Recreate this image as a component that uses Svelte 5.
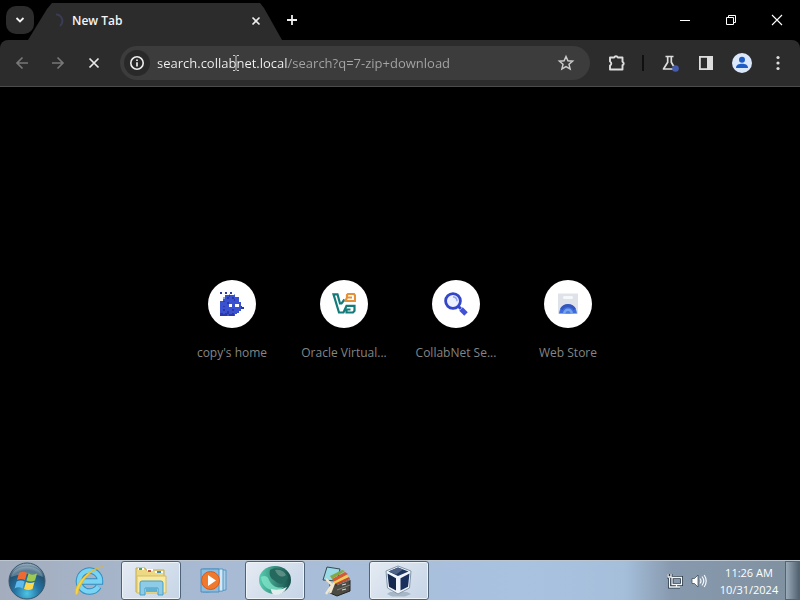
<script>
  let address = $state('search.collabnet.local/search?q=7-zip+download');

  const shortcuts = [
    { id: 'copy', label: "copy's home" },
    { id: 'vbox', label: 'Oracle Virtual...' },
    { id: 'search', label: 'CollabNet Se...' },
    { id: 'store', label: 'Web Store' }
  ];

  // Pixel mascot: a = dark, b = mid, c = light, w = white
  const sprite = [
    'a..a..a.......',
    '.....c..c.....',
    '...bbabbb.....',
    '..cbabbabbb...',
    '..bbbbbbabb...',
    'bbabbbbbbbb...',
    'bbbbabbbbbbb..',
    'bbbbbwwbbwwb..',
    'bbabbwwbbwwba.',
    'bbbbbbbbbbbbaa',
    'bbabbbbabbbb..',
    'bbbbabbbbbb...',
    'aabaabbabb....',
    'aaaabaaab.....'
  ];
  const tones = { a: '#2c37a8', b: '#3a52d0', c: '#8ea5ec', w: '#fff' };
  const pixels = sprite.flatMap((row, y) =>
    [...row].map((c, x) => ({ x, y, fill: tones[c] })).filter((p) => p.fill)
  );

  const apps = [
    { id: 'ie', label: 'Internet Explorer', open: false },
    { id: 'files', label: 'Windows Explorer', open: true },
    { id: 'media', label: 'Windows Media Player', open: false },
    { id: 'browser', label: 'Browser', open: true },
    { id: 'archive', label: 'Archive tools', open: false },
    { id: 'box', label: 'VirtualBox', open: true }
  ];
</script>

<div class="screen">
  <header class="tabstrip">
    <button class="tabsearch" aria-label="Search tabs">
      <svg width="10" height="10" viewBox="0 0 10 10"><path d="M1.5 3 5 6.5 8.5 3" fill="none" stroke="#f2f2f2" stroke-width="1.8" /></svg>
    </button>
    <div class="tab">
      <svg width="16" height="16" viewBox="0 0 16 16"><path d="M8 1.5A6.5 6.5 0 0 1 12 13" fill="none" stroke="#3a3b55" stroke-width="2" /></svg>
      <span class="title">New Tab</span>
      <button class="plain" aria-label="Close tab">
        <svg width="10" height="10" viewBox="0 0 10 10"><path d="m1.5 1.5 7 7m0-7-7 7" stroke="#eee" stroke-width="1.6" /></svg>
      </button>
    </div>
    <button class="plain" aria-label="New tab">
      <svg width="12" height="12" viewBox="0 0 12 12"><path d="M6 1v10M1 6h10" stroke="#eee" stroke-width="1.8" /></svg>
    </button>
    <div class="window">
      <button aria-label="Minimize"><svg width="12" height="12" viewBox="0 0 12 12"><path d="M1 6.5h10" stroke="#fff" /></svg></button>
      <button aria-label="Restore"><svg width="12" height="12" viewBox="0 0 12 12"><path d="M1.500 3.500h7v7h-7zM3.500 3.500v-2h7v7h-2" fill="none" stroke="#fff" /></svg></button>
      <button aria-label="Close"><svg width="12" height="12" viewBox="0 0 12 12"><path d="m1 1 10 10M11 1 1 11" stroke="#fff" stroke-width="1.1" /></svg></button>
    </div>
  </header>

  <nav class="toolbar" aria-label="Browser toolbar">
    <div class="navigation">
      <button class="plain" aria-label="Back" disabled><svg width="16" height="16" viewBox="0 0 16 16"><path d="M14 8H3m5.500-5.500L3 8l5.500 5.500" fill="none" stroke="#777" stroke-width="1.7" /></svg></button>
      <button class="plain" aria-label="Forward" disabled><svg width="16" height="16" viewBox="0 0 16 16"><path d="M2 8h11M7.500 2.500 13 8l-5.500 5.500" fill="none" stroke="#777" stroke-width="1.7" /></svg></button>
      <button class="plain" aria-label="Stop loading"><svg width="16" height="16" viewBox="0 0 16 16"><path d="m3.500 3.500 9 9m0-9-9 9" stroke="#e8e8e8" stroke-width="1.7" /></svg></button>
    </div>
    <div class="omnibox">
      <button class="site" aria-label="Site information"><svg width="16" height="16" viewBox="0 0 16 16"><circle cx="8" cy="8" r="6.200" fill="none" stroke="#eee" stroke-width="1.600" /><path d="M8 7.200v4.200M8 4.400v1.700" stroke="#eee" stroke-width="1.700" /></svg></button>
      <input aria-label="Address" bind:value={address} spellcheck="false" />
      <svg class="pointer" width="8" height="16" viewBox="0 0 8 16" aria-hidden="true"><path d="M1 .5h2l1 1 1-1h2M1 15.500h2l1-1 1 1h2M4 1.500v13" fill="none" stroke="#ccc" /></svg>
      <button class="plain" aria-label="Bookmark"><svg width="18" height="18" viewBox="0 0 18 18"><path d="m9 2.500 1.900 4.300 4.700.4-3.600 3.100 1.100 4.600L9 12.500l-4.100 2.400L6 10.300 2.400 7.200l4.700-.4z" fill="none" stroke="#ccc" stroke-width="1.500" /></svg></button>
    </div>
    <div class="actions">
      <button class="plain" aria-label="Extensions"><svg width="20" height="20" viewBox="0 0 20 20"><path d="M4 4.500h4.200a1.900 1.900 0 0 1 3.600 0H16.500v4.300a1.800 1.800 0 0 1 0 3.400v4.300H4v-4a2.200 2.200 0 0 0 0-4z" fill="none" stroke="#ddd" stroke-width="1.900" stroke-linejoin="round" /></svg></button>
      <i class="divider"></i>
      <button class="plain" aria-label="Experiments"><svg width="20" height="20" viewBox="0 0 20 20"><path d="M5.500 3.500h8M7.700 4v5.200L3.500 16h11.800l-4-6.800V4" fill="none" stroke="#ddd" stroke-width="1.700" stroke-linejoin="round" /><circle cx="15.500" cy="15.500" r="3.300" fill="#455cae" /></svg></button>
      <button class="plain" aria-label="Side panel"><svg width="16" height="16" viewBox="0 0 16 16"><rect x="1.900" y="1.900" width="12.200" height="12.200" fill="none" stroke="#ddd" stroke-width="1.800" /><path d="M9 2h5v12H9z" fill="#ddd" /></svg></button>
      <button class="plain" aria-label="Profile"><svg width="20" height="20" viewBox="0 0 20 20"><circle cx="10" cy="10" r="10" fill="#dbe7fb" /><circle cx="10" cy="6.700" r="3" fill="#1f5bc4" /><path d="M4 15c0-3.300 3-4.200 6-4.200s6 .9 6 4.200z" fill="#1f5bc4" /></svg></button>
      <button class="plain" aria-label="Menu"><svg width="4" height="16" viewBox="0 0 4 16" fill="#ddd"><circle cx="2" cy="2.500" r="1.600" /><circle cx="2" cy="8" r="1.600" /><circle cx="2" cy="13.500" r="1.600" /></svg></button>
    </div>
  </nav>

  <main>
    {#each shortcuts as s (s.id)}
      <a class="shortcut" href="#{s.id}">
        <span class="disc">
          {#if s.id === 'copy'}
            <svg width="24" height="24" viewBox="0 0 14 14" shape-rendering="crispEdges">
              {#each pixels as p}<rect x={p.x} y={p.y} width="1" height="1" fill={p.fill} />{/each}
            </svg>
          {:else if s.id === 'vbox'}
            <svg width="24" height="24" viewBox="0 0 24 24" fill="none" stroke-width="2.200">
              <path d="M12.500 7.500 9.500 11.500H8L5.500 2.300h-4L7 20.500h4.500l3-6.700h8v5l-1.500 1.700h-6.500v-3h4" stroke="#147b7b" />
              <path d="M15 5.500V3l1-1h6l1 1.500V9h-9.500l1.500-3.500h5" stroke="#e5913a" />
            </svg>
          {:else if s.id === 'search'}
            <svg width="24" height="24" viewBox="0 0 24 24"><circle cx="9" cy="9" r="7.400" fill="#edf1ff" stroke="#3346c9" stroke-width="2.800" /><path d="M9 4.800a4.500 4.500 0 0 1 4 4.500" fill="none" stroke="#91a6ef" stroke-width="1.500" /><path d="m14.500 14.500 2.300 2.300" stroke="#3346c9" stroke-width="3" /><path d="m17 17 5 5" stroke="#4352d5" stroke-width="5" /></svg>
          {:else}
            <svg width="24" height="24" viewBox="0 0 24 24"><path d="M2 1.500h20v20.500H2z" fill="#dfe2e8" /><rect x="7" y="4" width="10" height="3" rx="1.500" fill="#f7f8fa" /><path d="M3 21.500a9 9 0 0 1 18 0z" fill="#3e6ddb" /><path d="M7 21.500a5 5 0 0 1 10 0z" fill="#75a4ea" /><path d="M4 17a9 9 0 0 1 16 0l-2.500 1a6.500 6.500 0 0 0-11 0z" fill="#3455bd" /><path d="M9.500 21.500a2.500 2.500 0 0 1 5 0z" fill="#4a7be0" /></svg>
          {/if}
        </span>
        <span class="label">{s.label}</span>
      </a>
    {/each}
  </main>

  <footer class="taskbar">
    <button class="start" aria-label="Start">
      <svg width="40" height="38" viewBox="0 0 40 38">
        <defs><radialGradient id="orb" cx=".5" cy=".85" r=".85"><stop offset="0" stop-color="#4ec4e4" /><stop offset=".4" stop-color="#2474a4" /><stop offset=".75" stop-color="#24506f" /><stop offset="1" stop-color="#a5b9c6" /></radialGradient></defs>
        <circle cx="20" cy="19" r="18" fill="url(#orb)" stroke="#38566c" />
        <path d="M4 15C7 1 33 1 36 15c-8-4-22-4-32 0z" fill="#fff" opacity=".25" />
        <path d="M12 11q4-2.500 8 0l-2 7q-4-2-8 0z" fill="#ed6b33" /><path d="M21.500 11.500q4 2 8.500 0l-2 7q-4 2-8.500 0z" fill="#9fca52" />
        <path d="M9.600 19.500q4-2 8 0l-2 7q-4-2.500-8 0z" fill="#5eb9ec" /><path d="M19 20q4 2 8.500 0l-2 7q-4 2-8.500 0z" fill="#ffd64c" />
      </svg>
    </button>
    <div class="apps">
      {#each apps as app (app.id)}
        <button class="app" class:open={app.open} aria-label={app.label}>
          {#if app.id === 'ie'}
            <svg width="34" height="34" viewBox="0 0 34 34" fill="none"><path d="M26.500 22.500A10.500 10.500 0 1 1 28 17.500H9.500" stroke="#328fc3" stroke-width="6.500" /><path d="M26.500 22.500A10.500 10.500 0 1 1 28 17.500H9.500" stroke="#79d3f2" stroke-width="4.500" /><path d="M4 31C-1 25 17 2 32 3c-10-.5-24 14-26 26" fill="#f5d34a" stroke="#e0b52c" stroke-width=".8" /></svg>
          {:else if app.id === 'files'}
            <svg width="34" height="34" viewBox="0 0 34 34"><path d="M2 4h9l1 2h18v22H2z" fill="#edd884" stroke="#c2aa51" /><path d="M4 5h6M13 6h6M21 8h8" stroke="#fff" stroke-width="2" /><path d="M5 5h3" stroke="#49a35c" stroke-width="2" /><path d="M14 7h3" stroke="#c25c42" stroke-width="2" /><path d="M23 8h4" stroke="#438fb4" stroke-width="2" /><path d="M3 12h29v17H3z" fill="#f8eaa1" stroke="#d3bd66" /><path d="M6 31V19q0-2 2-2h19q2 0 2 2v12h-5v-7H11v7z" fill="#8dcbe7" stroke="#4a9dc5" /><path d="M12 24h11v4H12z" fill="#5eb1d4" /></svg>
          {:else if app.id === 'media'}
            <svg width="30" height="28" viewBox="0 0 30 28"><path d="M8 3h20v20l-20 2z" fill="#abcfe9" stroke="#5398c7" /><path d="M5 2h20v22L5 25z" fill="#d3e7f5" stroke="#5398c7" /><path d="M3 2h18v23H3z" fill="#8bbde1" stroke="#4d8fbd" /><circle cx="12.500" cy="13.500" r="9" fill="#ef792d" stroke="#d45b21" /><path d="m10 8 8 5.500-8 5.500z" fill="#fff" /></svg>
          {:else if app.id === 'browser'}
            <svg width="34" height="32" viewBox="0 0 34 32"><defs><linearGradient id="globe"><stop stop-color="#58ceb0" /><stop offset="1" stop-color="#164e4a" /></linearGradient></defs><ellipse cx="17" cy="15" rx="16" ry="14" fill="url(#globe)" /><path d="M12 5c6-4 15-1 18 7-2 8-9 8-13 4-5-3-6-6-5-11z" fill="#24685e" /><path d="M17 5c5-1 9 1 11 5-4 3-8 2-11-5z" fill="#7fa9a0" opacity=".6" /><path d="M3 12c3-2 7-1 8 3 3 6 8 9 15 7-6 7-22 4-23-10z" fill="#7fe3c8" opacity=".8" /><path d="M13 24q9 2 16-2-4 8-12 8-4-1-4-6z" fill="#e0eeee" /></svg>
          {:else if app.id === 'archive'}
            <svg width="32" height="32" viewBox="0 0 32 32"><path d="m6 2 13 2-3 12-14-1z" fill="#9ad9e6" stroke="#344b55" /><path d="m9 11 12-6 3 1-13 8z" fill="#81ab43" /><path d="m11 14 13-7 3 2-14 8z" fill="#d65a31" /><path d="m12 17 14-7 3 3-15 7z" fill="#f0cb55" /><path d="m13 19 15-7 1 2-13 6z" fill="#c7482b" /><path d="m9 19 7 1 13-5v11L16 31l-7-3z" fill="#4b4a43" stroke="#232421" /><path d="m16 20 13-5M16 25l13-5" stroke="#82817a" /><path d="m21 20 4-1M21 25l4-1" stroke="#ddd" /><path d="m5 14 6 6-6 9M13 18l-4 10" fill="none" stroke="#eee6ce" stroke-width="2.400" /></svg>
          {:else}
            <svg width="32" height="32" viewBox="0 0 32 32"><path d="M7 27h17l4 2-6 2.500H9L4 29z" fill="#a7b7c6" /><path d="m15 1 13 5-1.500 17L15 29 4.500 23 3 6z" fill="#eff5fa" stroke="#8396a8" /><path d="m15 2.500 10.500 4L15 11 5.500 6.500z" fill="#22375f" /><path d="m4.500 8.500 8.500 4.700v12.300L6 21.800z" fill="#142850" /><path d="m26.500 8.500-9 4.700v12.300l7.500-3.700z" fill="#1b315d" /><path d="m15 2.500 5 2-7 5-7.500-3z" fill="#4d6286" /></svg>
          {/if}
        </button>
      {/each}
    </div>
    <div class="tray">
      <button class="plain" aria-label="Network"><svg width="16" height="16" viewBox="0 0 16 16"><path d="M5 4.500h9.500v7H5zM7 14h6M9.500 12v2M2.500 5v9H7M1 1v3h3V1" fill="none" stroke="#283844" stroke-width="3" /><path d="M5 4.500h9.500v7H5zM7 14h6M9.500 12v2M2.500 5v9H7M1 1v3h3V1" fill="none" stroke="#f4f7fa" stroke-width="1.300" /></svg></button>
      <button class="plain" aria-label="Volume"><svg width="16" height="16" viewBox="0 0 16 16"><path d="M1 5.500h2.500L7 2v12l-3.500-3.500H1z" fill="#fff" stroke="#34444f" stroke-width=".7" /><path d="M9 5.500q2 2.500 0 5M11 3.500q3.500 4.500 0 9M13.200 2q4 6 0 12" fill="none" stroke="#f4f7fa" stroke-width="1.200" /></svg></button>
      <button class="clock"><span>11:26 AM</span><span>10/31/2024</span></button>
      <button class="peek" aria-label="Show desktop"></button>
    </div>
  </footer>
</div>

<style>
  :global(body) { margin: 0; background: #000; }
  .screen {
    min-height: 100vh;
    display: flex;
    flex-direction: column;
    background: #000;
    font-family: "Open Sans", "Noto Sans", sans-serif;
    font-size: 12px;
  }
  button {
    display: grid;
    place-items: center;
    flex: none;
    padding: 0;
    border: 0;
    background: none;
    color: inherit;
    font: inherit;
  }
  svg { display: block; }
  .plain { width: 20px; height: 20px; }

  .tabstrip { display: flex; align-items: center; height: 40px; padding-left: 6px; }
  .tabsearch { width: 28px; height: 28px; border-radius: 10px; background: #2c2c2c; }
  .tab {
    display: flex;
    align-items: center;
    align-self: flex-end;
    gap: 8px;
    box-sizing: border-box;
    width: 254px;
    height: 37px;
    margin-left: -6px;
    padding: 0 16px 2px 20px;
    background: #2c2c2c;
    clip-path: polygon(0 100%, 19px 6px, 24px 0, calc(100% - 22px) 0, calc(100% - 18px) 5px, 100% 100%);
  }
  .title { flex: 1; color: #f5f5f5; font-weight: 600; line-height: 20px; }
  .window { display: flex; margin-left: auto; }
  .window button { width: 46px; height: 40px; }

  .toolbar {
    display: flex;
    align-items: center;
    height: 46px;
    border-bottom: 1px solid #4c4c4c;
    border-radius: 8px 8px 0 0;
    background: #2c2c2c;
  }
  .navigation { display: flex; gap: 16px; padding: 0 16px 0 12px; }
  .omnibox {
    position: relative;
    display: flex;
    flex: 1;
    align-items: center;
    min-width: 0;
    height: 34px;
    padding: 0 14px 0 4px;
    border-radius: 17px;
    background: #3c3c3c;
  }
  .site { width: 26px; height: 26px; border-radius: 50%; background: #292929; }
  input {
    flex: 1;
    min-width: 0;
    height: 20px;
    margin-left: 7px;
    padding: 0;
    border: 0;
    outline: 0;
    background: linear-gradient(to right, #f4f4f4 131px, #a6a6a6 131px) text;
    -webkit-text-fill-color: transparent;
    font: 13px/20px "Open Sans", "Noto Sans", sans-serif;
  }
  .pointer { position: absolute; left: 112px; top: 9px; }
  .actions { display: flex; align-items: center; gap: 16px; padding: 0 12px 0 16px; }
  .divider { width: 2px; height: 16px; background: #101010; }

  main { display: flex; flex: 1; align-items: center; justify-content: center; }
  .shortcut {
    display: flex;
    flex-direction: column;
    align-items: center;
    gap: 13px;
    width: 112px;
    padding-bottom: 2px;
    color: #858585;
    text-decoration: none;
  }
  .disc { display: grid; place-items: center; width: 48px; height: 48px; border-radius: 50%; background: #fff; }
  .label { line-height: 24px; white-space: nowrap; }

  .taskbar {
    display: flex;
    box-sizing: border-box;
    height: 40px;
    border-top: 1px solid #bcc6d0;
    background: linear-gradient(to right, #a3adbd, #a8bad3 25%, #a8c2e0 65%, #a5bfdb 78%, #8799ae 84%, #7f919f);
  }
  .start { width: 54px; }
  .apps { display: flex; gap: 2px; margin-left: 5px; }
  .app { box-sizing: border-box; width: 60px; border-radius: 3px; }
  .open {
    border: 1px solid #4f6378;
    background: linear-gradient(135deg, #e5ebf3, #c5d4e6);
    box-shadow: inset 0 0 0 1px #eef3f8;
  }
  .tray { display: flex; align-items: center; gap: 4px; margin-left: auto; color: #fff; }
  .clock { width: 64px; padding-left: 4px; margin: 0 2px; font-size: 11px; line-height: 17px; }
  .peek {
    box-sizing: border-box;
    align-self: stretch;
    width: 15px;
    border: 1px solid #536575;
    background: linear-gradient(to right, #9cabb8, #536270);
  }
</style>
